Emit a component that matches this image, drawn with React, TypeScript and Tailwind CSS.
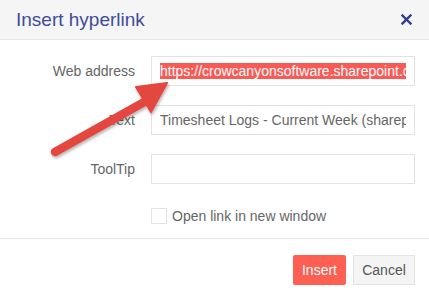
export default function App() {
  return (
    <div className="relative w-[429px] h-[296px] overflow-hidden bg-white font-['Liberation_Sans',Arial,sans-serif]">
      {/* Header */}
      <div className="flex h-[40px] items-center justify-between border-b border-[#e6e6e6] bg-[#f5f5f5] pl-4 pr-[17px]">
        <h1 className="text-[19px] leading-none text-[#3d4c9c]">Insert hyperlink</h1>
        <svg width="11" height="11" viewBox="0 0 11 11" className="text-[#2f3d8a]">
          <path d="M1.5 1.5 L9.5 9.5 M9.5 1.5 L1.5 9.5" stroke="currentColor" strokeWidth="2.4" strokeLinecap="square" />
        </svg>
      </div>

      {/* Body */}
      <div className="grid grid-cols-[135px_1fr] gap-x-4 gap-y-[19px] border-b border-[#e6e6e6] pt-4 pb-[14px] pr-[14px] text-[14px] text-[#666]">
        <label className="self-center text-right">Web address</label>
        <div className="h-[30px] overflow-hidden border border-[#e3e3e3] px-2 flex items-center">
          <div className="overflow-hidden whitespace-nowrap">
            <span className="bg-[#fa5a55] text-white leading-[16px] inline-block">https://crowcanyonsoftware.sharepoint.com/sites/timesheets</span>
          </div>
        </div>

        <label className="self-center text-right">Text</label>
        <div className="h-[30px] overflow-hidden border border-[#e3e3e3] px-2 flex items-center">
          <div className="overflow-hidden whitespace-nowrap">Timesheet Logs - Current Week (sharepoint.com)</div>
        </div>

        <label className="self-center text-right">ToolTip</label>
        <div className="h-[30px] border border-[#e3e3e3]" />

        <div />
        <div className="mt-[5px] flex items-center gap-[5px]">
          <span className="h-[16px] w-[16px] border border-[#e3e3e3] bg-white" />
          <span className="leading-[16px]">Open link in new window</span>
        </div>
      </div>

      {/* Footer */}
      <div className="flex justify-end gap-[7px] pt-4 pr-[14px] text-[14px]">
        <button className="h-[30px] w-[53px] rounded-[2px] bg-[#fd5f52] text-white">Insert</button>
        <button className="h-[30px] w-[62px] border border-[#e3e3e3] bg-[#f4f4f4] text-[#555]">Cancel</button>
      </div>

      {/* Annotation arrow */}
      <svg className="pointer-events-none absolute left-0 top-0" width="429" height="296" viewBox="0 0 429 296">
        <defs>
          <filter id="sh" x="-20%" y="-20%" width="140%" height="140%">
            <feDropShadow dx="1" dy="2" stdDeviation="1.5" floodColor="#000" floodOpacity="0.3" />
          </filter>
        </defs>
        <g filter="url(#sh)" fill="#e4463f" stroke="#e4463f">
          <line x1="55" y1="152" x2="146" y2="101" strokeWidth="8.5" strokeLinecap="round" />
          <polygon points="167,83 136,87 151,112" strokeWidth="2" strokeLinejoin="round" />
        </g>
      </svg>
    </div>
  )
}
